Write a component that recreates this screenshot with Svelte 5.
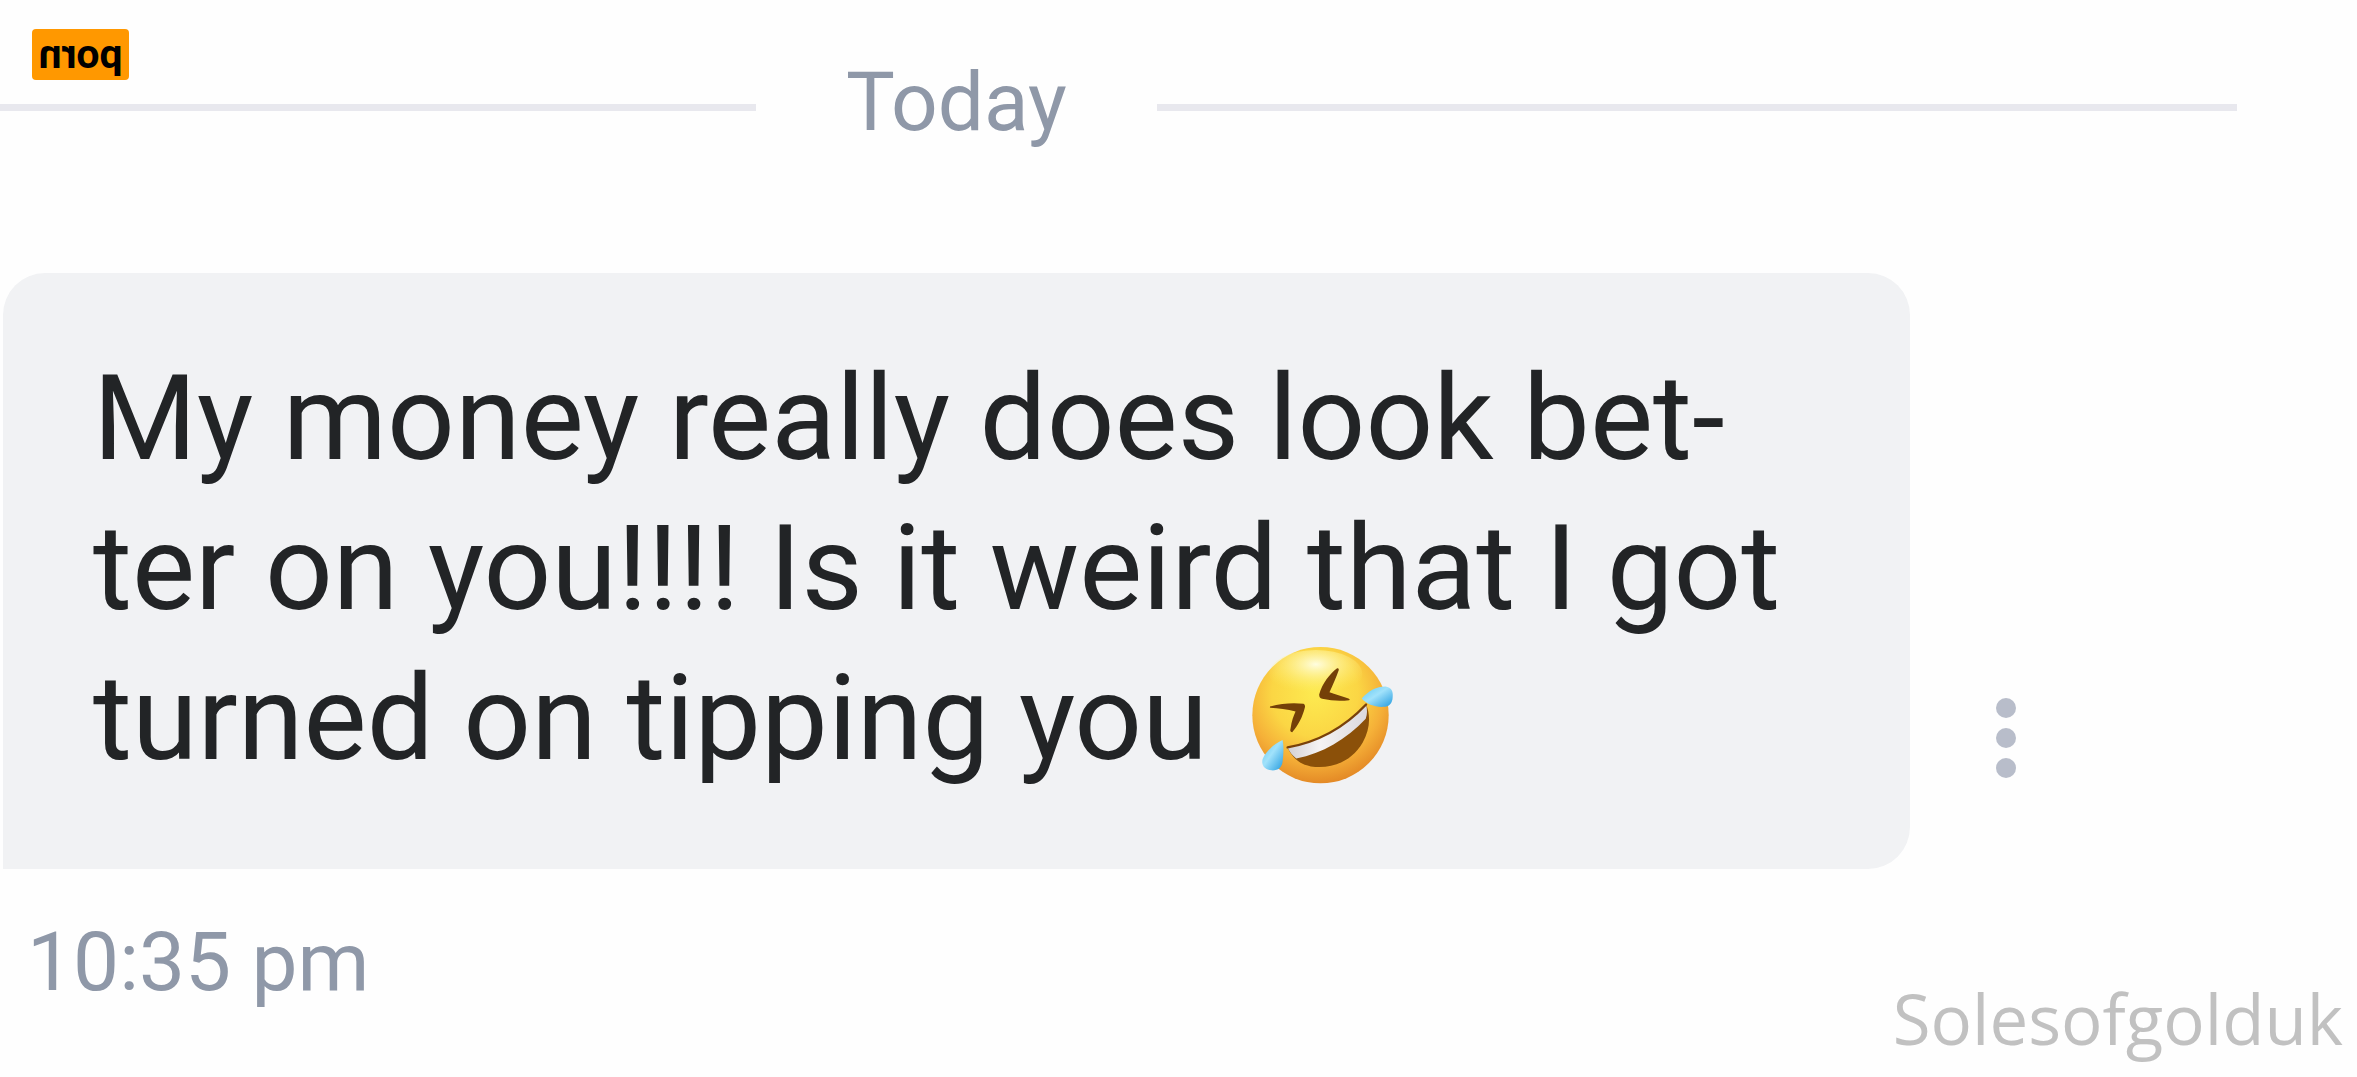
<script lang="ts">
  interface Message {
    readonly text: string;
    readonly time: string;
  }

  const day = "Today";
  const watermark = "Solesofgolduk";
  const message: Message = {
    text: "My money really does look bet\u00ADter on you!!!! Is it weird that I got turned on tipping you",
    time: "10:35 pm",
  };
</script>

<main class="chat">
  <span class="badge">porn</span>

  <div class="day">
    <span class="rule before"></span>
    <h2>{day}</h2>
    <span class="rule after"></span>
  </div>

  <article class="message">
    <div class="row">
      <p class="bubble">
        {message.text}
        <svg class="emoji" viewBox="90 70 440 430" role="img" aria-label="Rolling on the floor laughing">
          <defs>
            <radialGradient id="face" cx="0.46" cy="0.34" r="0.66">
              <stop offset="0" stop-color="#fdea50" />
              <stop offset="0.48" stop-color="#fbd644" />
              <stop offset="0.76" stop-color="#f5b038" />
              <stop offset="1" stop-color="#e48a26" />
            </radialGradient>
            <radialGradient id="shine" cx="0.5" cy="0.3" r="0.6">
              <stop offset="0" stop-color="#fffde0" />
              <stop offset="1" stop-color="#fff26a" stop-opacity="0" />
            </radialGradient>
            <linearGradient id="teeth" x1="0" y1="0" x2="1" y2="0">
              <stop offset="0" stop-color="#d3d0d3" />
              <stop offset="0.4" stop-color="#f5f3f4" />
              <stop offset="1" stop-color="#dcd9dd" />
            </linearGradient>
            <linearGradient id="tear" x1="0" y1="0" x2="1" y2="1">
              <stop offset="0" stop-color="#5fc8f2" />
              <stop offset="0.45" stop-color="#a1e2fb" />
              <stop offset="1" stop-color="#239bdf" />
            </linearGradient>
          </defs>
          <circle cx="304" cy="284" r="205" fill="url(#face)" />
          <ellipse cx="290" cy="160" rx="140" ry="72" fill="url(#shine)" />
          <path d="M205 381C301 364 376 321 441 252C456 287 452 328 431 366C398 424 334 448 275 438C239 431 218 410 205 381Z" fill="#8b5009" />
          <path d="M205 381C301 364 376 321 441 252C445 268 445 281 440 295C381 357 310 400 231 414C219 405 211 394 205 381Z" fill="url(#teeth)" />
          <path d="M205 381C301 364 376 321 441 252" fill="none" stroke="#79410a" stroke-width="7" stroke-linecap="round" />
          <path d="M152 258C188 249 220 246 253 250Q259 253 257 261C250 289 237 315 219 335C213 335 212 331 214 324C217 302 223 286 229 273C204 266 178 264 152 262Z" fill="#744008" />
          <path d="M354 143C331 161 310 187 300 222Q300 233 309 235C337 241 365 242 390 239Q395 236 386 233C368 227 348 221 331 215C340 195 352 169 359 148Q360 142 354 143Z" fill="#744008" />
          <path d="M428 234C448 211 473 198 499 198C518 200 523 213 521 230C520 248 511 259 493 259C466 260 443 251 428 234Z" fill="url(#tear)" />
          <path d="M190 359C164 372 139 392 130 416C125 436 137 448 157 450C177 451 188 441 190 423C193 400 194 377 190 359Z" fill="url(#tear)" />
        </svg>
      </p>
      <button class="menu" type="button" aria-label="Message options">
        <span></span>
        <span></span>
        <span></span>
      </button>
    </div>
    <time>{message.time}</time>
  </article>

  <small class="watermark">{watermark}</small>
</main>

<style>
  :global(body) {
    margin: 0;
    background: #fefefe;
  }

  .chat {
    position: relative;
    box-sizing: border-box;
    min-height: 100vh;
    padding-top: 49px;
    overflow: hidden;
    color: #8f98a8;
    font-family: Roboto, sans-serif;
  }

  .badge {
    position: absolute;
    top: 29px;
    left: 32px;
    width: 97px;
    height: 51px;
    border-radius: 4px;
    background: #ff9800;
    color: #000;
    font: 700 41px/51px Roboto, sans-serif;
    text-align: center;
    transform: scaleX(-1);
  }

  .day {
    display: flex;
    align-items: center;
    gap: 90px;
    margin-right: 120px;
  }

  .rule {
    height: 7px;
    background: #e8e8ee;
  }

  .before {
    flex: 7;
  }

  .after {
    flex: 10;
  }

  h2 {
    margin: 0;
    padding-bottom: 10px;
    font-size: 82px;
    font-weight: 400;
    line-height: 106px;
  }

  .message {
    margin: 108px 0 0 3px;
  }

  .row {
    display: flex;
    align-items: flex-end;
    gap: 70px;
  }

  .bubble {
    box-sizing: border-box;
    width: 81%;
    margin: 0;
    padding: 71px 90px 75px;
    border-radius: 42px 42px 42px 0;
    background: #f1f2f4;
    color: #222426;
    font-size: 119px;
    line-height: 150px;
  }

  .emoji {
    width: 147px;
    height: 143px;
    margin: -30px 0 -20px 12px;
    vertical-align: -8px;
  }

  .menu {
    display: grid;
    gap: 10px;
    margin: 0 0 75px;
    padding: 16px;
    border: 0;
    background: transparent;
    cursor: pointer;
  }

  .menu span {
    width: 20px;
    height: 20px;
    border-radius: 50%;
    background: #b8bdca;
  }

  time {
    display: block;
    margin: 40px 0 0 24px;
    font-size: 82px;
    line-height: 106px;
  }

  .watermark {
    position: absolute;
    right: 14px;
    bottom: 12px;
    color: #c1c1c1;
    font: 400 69px/94px "Open Sans", sans-serif;
  }
</style>
